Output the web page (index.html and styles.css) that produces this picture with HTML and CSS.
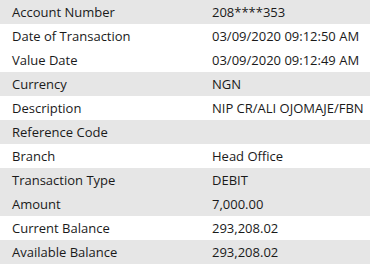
FILE: index.html
```html
<!DOCTYPE html>
<html>
<head>
<meta charset="utf-8">
<link rel="stylesheet" href="styles.css">
</head>
<body>
<div class="details">
  <div class="row alt"><span class="label">Account Number</span><span class="value">208****353</span></div>
  <div class="row"><span class="label">Date of Transaction</span><span class="value">03/09/2020 09:12:50 AM</span></div>
  <div class="row"><span class="label">Value Date</span><span class="value">03/09/2020 09:12:49 AM</span></div>
  <div class="row alt"><span class="label">Currency</span><span class="value">NGN</span></div>
  <div class="row"><span class="label">Description</span><span class="value">NIP CR/ALI OJOMAJE/FBN</span></div>
  <div class="row alt"><span class="label">Reference Code</span><span class="value"></span></div>
  <div class="row"><span class="label">Branch</span><span class="value">Head Office</span></div>
  <div class="row alt"><span class="label">Transaction Type</span><span class="value">DEBIT</span></div>
  <div class="row alt"><span class="label">Amount</span><span class="value">7,000.00</span></div>
  <div class="row"><span class="label">Current Balance</span><span class="value">293,208.02</span></div>
  <div class="row alt"><span class="label">Available Balance</span><span class="value">293,208.02</span></div>
</div>
</body>
</html>
```

FILE: styles.css
```css
html, body {
  margin: 0;
  padding: 0;
  background: #ffffff;
}
.details {
  width: 370px;
  font-family: "Open Sans", "Noto Sans", sans-serif;
  font-size: 13px;
  color: #1a1a1a;
}
.row {
  display: grid;
  grid-template-columns: 212px 1fr;
  height: 24px;
  align-items: center;
}
.row.alt {
  background: #e6e6e6;
}
.label {
  padding-left: 12px;
}
```
